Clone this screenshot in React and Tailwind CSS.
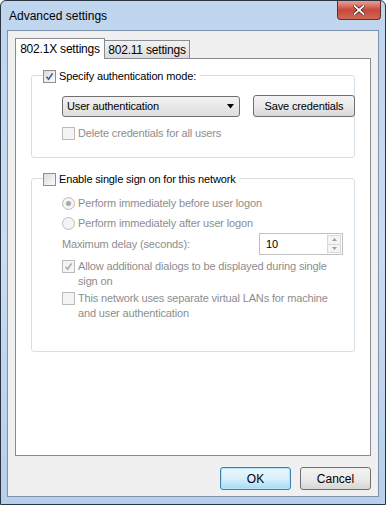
import React from 'react';

const font = { fontFamily: '"Liberation Sans", Arial, sans-serif' };

const CheckBox = ({ checked, disabled }) => (
  <span
    className={`inline-flex w-[13px] h-[13px] shrink-0 items-center justify-center border ${
      disabled ? 'border-[#bcbcbc] bg-[#f4f4f4]' : 'border-[#8e8f8f] bg-gradient-to-br from-[#dcdcdc] to-[#fbfbfb]'
    }`}
  >
    {checked && (
      <svg width="9" height="9" viewBox="0 0 9 9">
        <path
          d="M1.5 4.8 L3.6 7.2 L7.6 1.4"
          fill="none"
          stroke={disabled ? '#a9a9a9' : '#3a5e9c'}
          strokeWidth="1.6"
        />
      </svg>
    )}
  </span>
);

const Radio = ({ checked }) => (
  <span className="inline-flex w-[13px] h-[13px] shrink-0 items-center justify-center rounded-full border border-[#bcbcbc] bg-[#f4f4f4]">
    {checked && <span className="w-[5px] h-[5px] rounded-full bg-[#a8a8a8]" />}
  </span>
);

export default function App() {
  return (
    <div
      className="w-[386px] h-[505px] flex flex-col border border-[#2b3442] rounded-t-[6px] bg-gradient-to-b from-[#bfd5ee] via-[#c9dcf1] to-[#b7cfea] text-[11px] tracking-[-0.15px] text-black"
      style={font}
    >
      {/* title bar */}
      <div className="h-[29px] flex items-start justify-between">
        <span className="pl-[8px] pt-[6px] text-[12px] tracking-normal text-black">Advanced settings</span>
        <div className="mr-[4px] w-[44px] h-[19px] rounded-b-[4px] border border-[#6b2a24] border-t-0 bg-gradient-to-b from-[#e8a094] via-[#c9473a] to-[#cf6a55] flex items-center justify-center">
          <svg width="12" height="10" viewBox="0 0 12 10">
            <path d="M1.5 1 L10.5 9 M10.5 1 L1.5 9" stroke="#3a1a16" strokeWidth="3.2" strokeLinecap="square" />
            <path d="M1.5 1 L10.5 9 M10.5 1 L1.5 9" stroke="#ffffff" strokeWidth="1.8" strokeLinecap="square" />
          </svg>
        </div>
      </div>

      {/* client area */}
      <div className="flex-1 mx-[6px] mb-[7px] border border-[#7d93ad] bg-[#f0f0f0] flex flex-col px-[7px] pt-[6px]">
        {/* tabs */}
        <div className="flex items-end h-[21px] whitespace-nowrap text-[12px] tracking-[-0.2px]">
          <div className="h-[21px] w-[90px] border border-b-0 border-[#898c95] bg-white flex items-center justify-center -mb-px relative z-10">
            802.1X settings
          </div>
          <div className="h-[18px] w-[85px] border border-b-0 border-l-0 border-[#898c95] bg-gradient-to-b from-[#f2f2f2] to-[#dcdcdc] flex items-center justify-center">
            802.11 settings
          </div>
        </div>

        {/* panel */}
        <div className="h-[398px] border border-[#898c95] bg-white px-[15px] pt-[10px]">
          {/* group 1 */}
          <div className="relative border border-[#d5dfe5] rounded-[3px] h-[83px] mt-[6px] pl-[30px] pr-[3px] pt-[19px]">
            <div className="absolute -top-[8px] left-[11px] bg-white flex items-center gap-[3px] pr-[4px]">
              <CheckBox checked />
              <span>Specify authentication mode:</span>
            </div>
            <div className="flex items-center gap-[13px] whitespace-nowrap">
              <div className="w-[178px] h-[21px] shrink-0 border border-[#707070] rounded-[3px] bg-gradient-to-b from-[#f2f2f2] to-[#dedede] flex items-center justify-between px-[4px]">
                <span>User authentication</span>
                <svg width="8" height="5" viewBox="0 0 8 5">
                  <path d="M0 0 H7 L3.5 4.5 Z" fill="#000" />
                </svg>
              </div>
              <div className="w-[102px] h-[22px] shrink-0 border border-[#707070] rounded-[3px] bg-gradient-to-b from-[#f2f2f2] via-[#ebebeb] to-[#d6d6d6] flex items-center justify-center">
                Save credentials
              </div>
            </div>
            <div className="flex items-center gap-[3px] mt-[8px] text-[#8d8d8d]">
              <CheckBox disabled />
              <span>Delete credentials for all users</span>
            </div>
          </div>

          {/* group 2 */}
          <div className="relative border border-[#d5dfe5] rounded-[3px] h-[174px] mt-[20px] pl-[30px] pr-[11px] pt-[14px] text-[#8d8d8d]">
            <div className="absolute -top-[8px] left-[11px] bg-white flex items-center gap-[3px] pr-[4px] text-black">
              <CheckBox />
              <span>Enable single sign on for this network</span>
            </div>
            <div className="flex items-center gap-[3px] h-[20px]">
              <Radio checked />
              <span>Perform immediately before user logon</span>
            </div>
            <div className="flex items-center gap-[3px] h-[20px]">
              <Radio />
              <span>Perform immediately after user logon</span>
            </div>
            <div className="flex items-center justify-between h-[22px]">
              <span>Maximum delay (seconds):</span>
              <div className="w-[84px] h-[22px] border border-[#c0c0c0] bg-white flex items-center justify-between pl-[6px] pr-[1px] text-black">
                <span>10</span>
                <div className="flex flex-col w-[14px] h-[18px] border border-[#d8d8d8] bg-[#f5f5f5]">
                  <div className="flex-1 flex items-center justify-center border-b border-[#d8d8d8]">
                    <svg width="5" height="3" viewBox="0 0 5 3"><path d="M0 3 H5 L2.5 0 Z" fill="#a0a0a0" /></svg>
                  </div>
                  <div className="flex-1 flex items-center justify-center">
                    <svg width="5" height="3" viewBox="0 0 5 3"><path d="M0 0 H5 L2.5 3 Z" fill="#a0a0a0" /></svg>
                  </div>
                </div>
              </div>
            </div>
            <div className="flex items-start gap-[3px] mt-[4px] leading-[15px] pr-[4px]">
              <span className="mt-[1px]"><CheckBox checked disabled /></span>
              <span>Allow additional dialogs to be displayed during single sign on</span>
            </div>
            <div className="flex items-start gap-[3px] mt-[2px] leading-[15px] pr-[4px]">
              <span className="mt-[1px]"><CheckBox disabled /></span>
              <span>This network uses separate virtual LANs for machine and user authentication</span>
            </div>
          </div>
        </div>

        {/* buttons */}
        <div className="flex justify-end gap-[9px] mt-[11px] text-[12px] tracking-normal">
          <div className="w-[71px] h-[23px] border border-[#3c7fb1] rounded-[3px] bg-gradient-to-b from-[#eaf6fd] via-[#d9f0fc] to-[#a7d9f5] flex items-center justify-center shadow-[inset_0_0_0_1px_#b4e4fb]">
            OK
          </div>
          <div className="w-[71px] h-[23px] border border-[#707070] rounded-[3px] bg-gradient-to-b from-[#f2f2f2] via-[#ebebeb] to-[#d6d6d6] flex items-center justify-center">
            Cancel
          </div>
        </div>
      </div>
    </div>
  );
}
